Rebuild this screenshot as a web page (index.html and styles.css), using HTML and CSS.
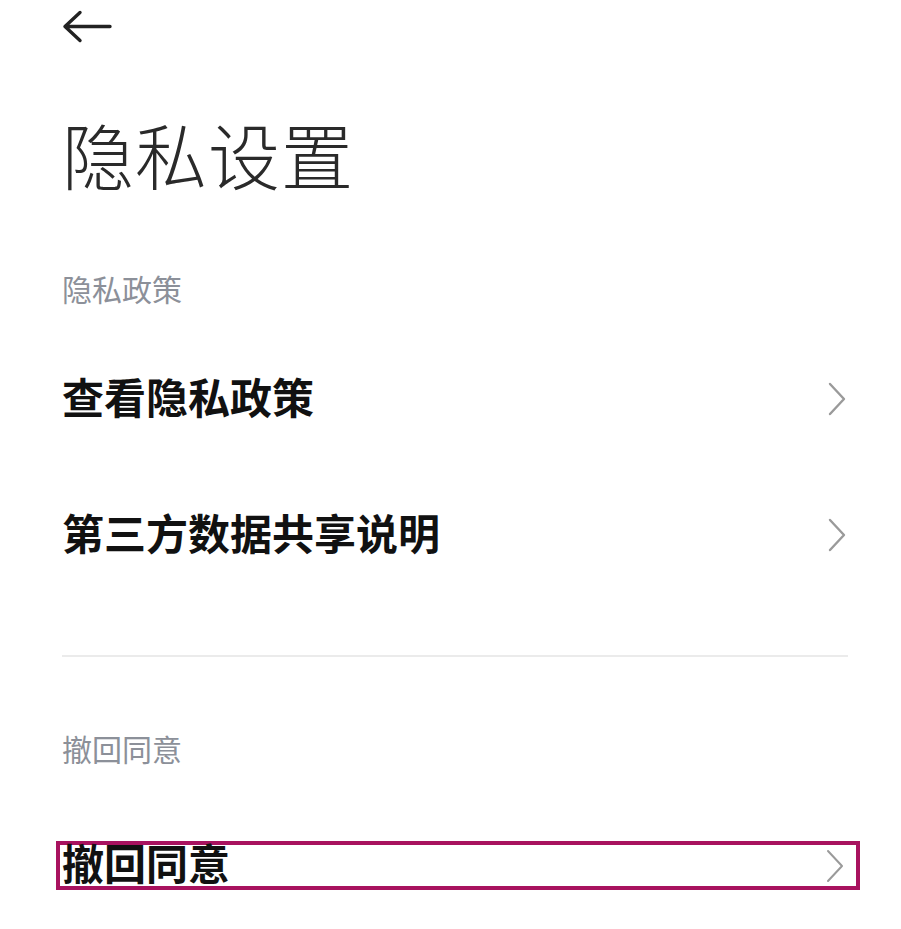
FILE: index.html
```html
<!DOCTYPE html>
<html lang="zh-CN">
<head>
    <meta charset="UTF-8">
    <meta name="viewport" content="width=device-width, initial-scale=1.0">
    <title>隐私设置</title>
    <link rel="stylesheet" href="styles.css">
</head>
<body>
    <div class="page">
        <div class="top-bar">
            <svg class="back" width="52" height="34" viewBox="0 0 52 34">
                <path d="M49 16.5H4 M19 2.5L4 16.5L19 30.5" fill="none" stroke="#222" stroke-width="3.4" stroke-linecap="round" stroke-linejoin="round"/>
            </svg>
        </div>

        <h1 class="title">隐私设置</h1>

        <div class="section-label">隐私政策</div>
        <div class="item">
            <span>查看隐私政策</span>
            <svg class="chevron" width="20" height="34" viewBox="0 0 20 34"><path d="M3 2L17 17L3 32" fill="none" stroke="#9a9a9a" stroke-width="2.4" stroke-linecap="round" stroke-linejoin="round"/></svg>
        </div>
        <div class="item">
            <span>第三方数据共享说明</span>
            <svg class="chevron" width="20" height="34" viewBox="0 0 20 34"><path d="M3 2L17 17L3 32" fill="none" stroke="#9a9a9a" stroke-width="2.4" stroke-linecap="round" stroke-linejoin="round"/></svg>
        </div>

        <div class="divider"></div>

        <div class="section-label second">撤回同意</div>
        <div class="item highlighted">
            <span>撤回同意</span>
            <svg class="chevron" width="20" height="34" viewBox="0 0 20 34"><path d="M3 2L17 17L3 32" fill="none" stroke="#9a9a9a" stroke-width="2" stroke-linecap="round" stroke-linejoin="round"/></svg>
        </div>
    </div>
</body>
</html>
```

FILE: styles.css
```css
body {
    margin: 0;
    background: #ffffff;
    font-family: "Noto Sans CJK SC", "Noto Sans", sans-serif;
    color: #111;
}
.page {
    padding: 0 53px 0 62px;
}
.top-bar {
    height: 56px;
    display: flex;
    align-items: flex-start;
    padding-top: 10px;
    box-sizing: border-box;
}
.back {
    margin-left: -1px;
}
.title {
    margin: 61px 0 0 0;
    font-size: 72px;
    line-height: 72px;
    font-weight: 300;
    color: #2a2a2a;
    letter-spacing: 1px;
}
.section-label {
    margin-top: 84px;
    font-size: 30px;
    line-height: 30px;
    color: #8c9099;
}
.section-label.second {
    margin-top: 76px;
}
.item {
    height: 136px;
    display: flex;
    align-items: center;
    justify-content: space-between;
    font-size: 42px;
    font-weight: 700;
    line-height: 1;
}
.item span {
    margin-bottom: 6px;
}
.section-label + .item {
    margin-top: 28px;
}
.chevron {
    margin-right: 1px;
}
.divider {
    margin-top: 52px;
    height: 2px;
    background: #ebebeb;
}
.item.highlighted {
    height: 49px;
    margin: 78px -12px 0 -6px;
    padding: 0 10px 0 2px;
    border: 4px solid #a8125f;
    box-sizing: border-box;
}
.item.highlighted span {
    margin-bottom: 8px;
}
```
